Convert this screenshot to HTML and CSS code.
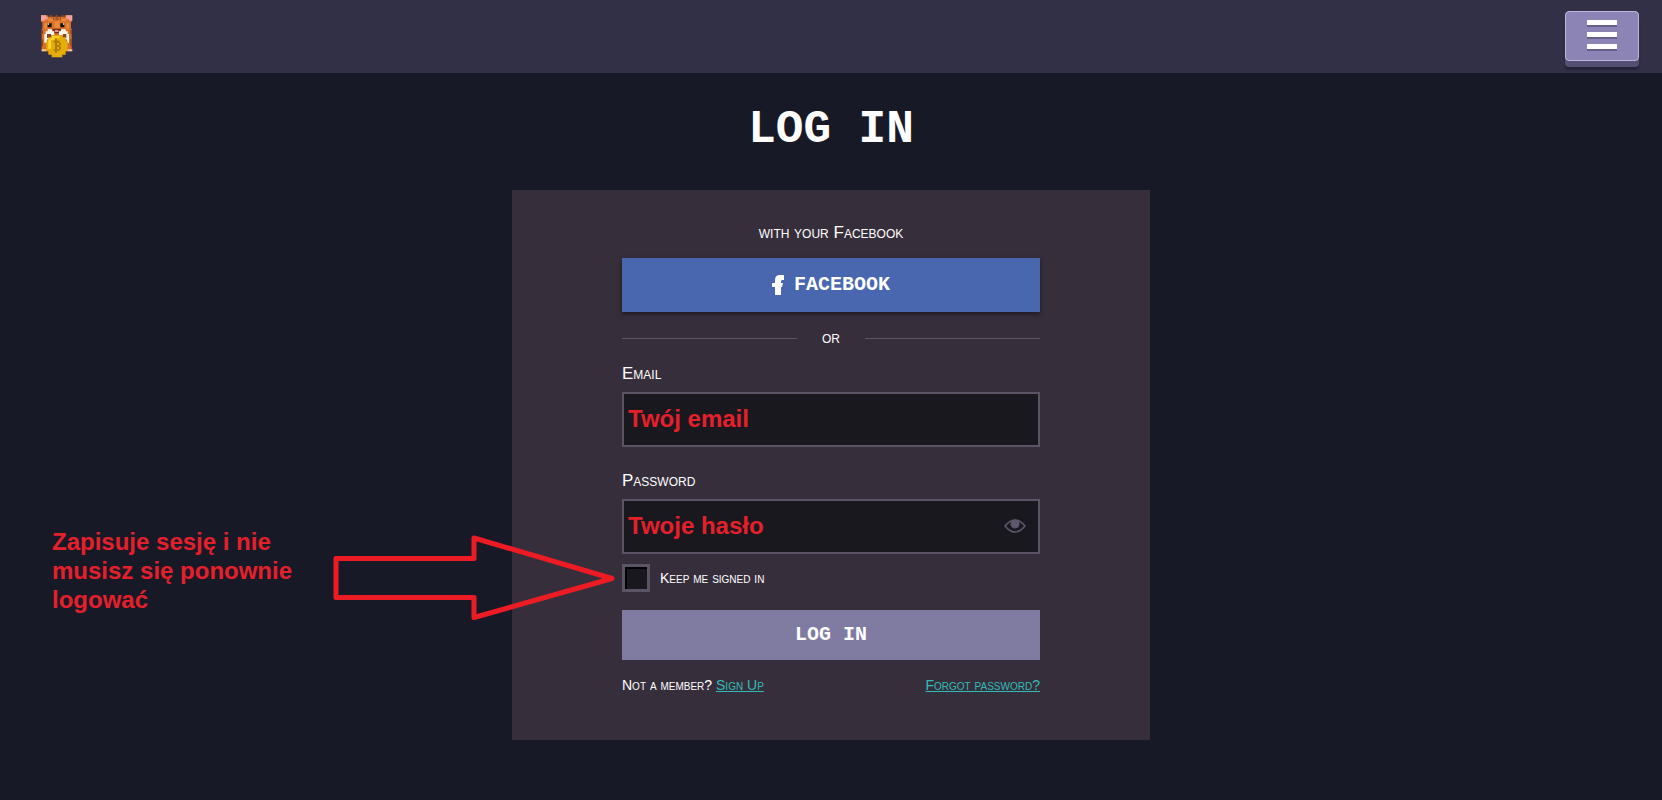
FILE: index.html
```html
<!DOCTYPE html>
<html lang="en">

<head>
    <meta charset="UTF-8">
    <meta name="viewport" content="width=device-width, initial-scale=1.0">
    <title>Log in</title>
    <link rel="stylesheet" href="styles.css">
</head>

<body>
    <header class="header">
        <a class="logo" href="#" aria-label="Home">
            <svg width="32" height="44" viewBox="0 0 96 132">
                <!-- ears and body -->
                <path fill="#d9702a" d="M0 4h20v4h52V4h20v20h-2v20h2v68H2V44h2V24H0z" />
                <path fill="#8d451d" d="M24 4h10v4H24zM44 2h6v8h-6zM60 4h10v4H60zM2 48h4v12H2zM88 48h4v12h-4zM2 76h4v20H2zM88 76h4v20h-4z" />
                <path fill="#f2a39b" d="M0 4h16v4h4v8h-8v4H0zM76 4h18v16H84v-4h-8z" />
                <path fill="#e9893b" d="M20 14h16v8H20zM60 14h16v8H60zM40 22h16v20H40zM10 28h8v16h-8zM76 28h8v16h-8z" />
                <path fill="#a65320" d="M36 10h4v8h-4zM44 10h8v8h-8zM56 10h4v8h-4z" />
                <!-- eyes -->
                <path fill="#14110f" d="M20 28h12v12H20zM58 28h12v12H58z" />
                <path fill="#f5e6d8" d="M20 28h4v4h-4zM66 28h4v4h-4z" />
                <!-- cheeks, mouth, paws -->
                <path fill="#fff7ee" d="M20 46h14v6h6v12H30v12H18v10H10V60h4v-8h6zM60 46h14v6h6v8h4v26h-6V76H66V64H54V52h6z" />
                <path fill="#6d3018" d="M34 44h26v6h-6v8H40v-8h-6z" />
                <path fill="#ef8f91" d="M42 48h10v6H42z" />
                <path fill="#8a4421" d="M18 60h12v12H18zM66 60h10v12H66z" />
                <path fill="#f2c4aa" d="M2 106h14v6H2zM80 106h14v6H80z" />
                <!-- coin -->
                <path fill="#e5ad08" d="M32 64h32v6h10v10h6v32h-6v10H64v8H32v-8H22v-10h-6V80h6V70h10z" />
                <path fill="#ffd42b" d="M32 66h24v5H32zM22 76h8v28h-8zM28 72h12v6H28z" />
                <path fill="#ad7a04" d="M42 74h6v6h8v6h4v8h-4v4h4v8h-4v4h-8v6h-6v-6h-4v-4h4V86h-4v-6h4zM48 86v8h6v-8zM48 99v7h6v-7z" />
            </svg>
        </a>
        <button class="menu" type="button" aria-label="Menu">
            <span></span>
            <span></span>
            <span></span>
        </button>
    </header>

    <main class="main">
        <h1 class="title">LOG IN</h1>
        <form class="card">
            <p class="hint">with your Facebook</p>
            <button class="btn facebook" type="button">
                <svg width="12" height="20" viewBox="0 0 12 20">
                    <path fill="#fff" d="M12 0v5H10Q9 5 9 7v1h2l-1 4H9v8H3v-8H0V8h3V5Q3 0 8 0z" />
                </svg>
                <span>FACEBOOK</span>
            </button>
            <div class="or">or</div>

            <label class="label" for="email">Email</label>
            <input class="input" id="email" type="text" value="Twój email">

            <label class="label" for="password">Password</label>
            <div class="password">
                <input class="input" id="password" type="text" value="Twoje hasło">
                <button class="eye" type="button" aria-label="Show password">
                    <svg width="22" height="14" viewBox="0 0 22 14">
                        <path fill="none" stroke="#5d586b" stroke-width="1.5" d="M1 7Q6 1 11 1T21 7Q16 13 11 13T1 7z" />
                        <circle cx="11" cy="5" r="4.5" fill="#5d586b" />
                    </svg>
                </button>
            </div>

            <div class="keep">
                <input class="check" id="keep" type="checkbox">
                <label for="keep">Keep me signed in</label>
                <div class="note">
                    <p>Zapisuje sesję i nie musisz się ponownie logować</p>
                    <svg width="282" height="86" viewBox="0 0 282 86">
                        <path fill="none" stroke="#ed1c24" stroke-width="5" stroke-linejoin="round" d="M3 23.500H141V3L279 43.500 141 82.500V62.500H3z" />
                    </svg>
                </div>
            </div>

            <button class="btn submit" type="submit">LOG IN</button>
            <div class="links">
                <span>Not a member? <a href="#">Sign Up</a></span>
                <a href="#">Forgot password?</a>
            </div>
        </form>
    </main>
</body>

</html>
```

FILE: styles.css
```css
* {
    box-sizing: border-box;
}

body,
h1,
p {
    margin: 0;
    padding: 0;
}

body {
    min-height: 100vh;
    background-color: #181927;
    color: #fff;
    font-family: "Liberation Sans", Arial, sans-serif;
}

button {
    padding: 0;
    border: 0;
    color: #fff;
    cursor: pointer;
}

/* header */
.header {
    display: flex;
    justify-content: space-between;
    align-items: flex-start;
    height: 73px;
    padding: 11px 23px 0 41px;
    background-color: #313046;
}
.logo {
    padding-top: 3px;
}
.logo svg {
    display: block;
}
.menu {
    display: flex;
    flex-direction: column;
    align-items: center;
    justify-content: center;
    gap: 7px;
    width: 74px;
    height: 50px;
    padding-bottom: 4px;
    border: 1px solid #c0b5dc;
    border-radius: 4px;
    background-color: #8c84b4;
    box-shadow: 0 6px 0 #544e72, 0 9px 2px #242338;
}
.menu span {
    width: 30px;
    height: 5px;
    background-color: #fff;
    box-shadow: 0 2px 0 #66608a;
}

/* log in form */
.main {
    padding: 27px 0 60px;
}
.title {
    margin-bottom: 30px;
    font: bold 46px/60px "Liberation Mono", monospace;
    text-align: center;
}
.card {
    max-width: 638px;
    margin: 0 auto;
    padding: 33px 110px 45px;
    background-color: #372e3c;
    font-variant: small-caps;
}
.hint {
    margin-bottom: 15px;
    font-size: 17px;
    line-height: 20px;
    text-align: center;
}
.btn {
    display: flex;
    align-items: center;
    justify-content: center;
    gap: 10px;
    width: 100%;
    font: bold 20px/24px "Liberation Mono", monospace;
}
.facebook {
    height: 54px;
    background-color: #4867ae;
    box-shadow: 0 2px 5px rgba(0, 0, 0, .5);
}
.or {
    display: flex;
    align-items: center;
    gap: 25px;
    margin: 16px 0;
    font-size: 17px;
    line-height: 20px;
}
.or::before,
.or::after {
    content: "";
    flex: 1;
    height: 1px;
    background-color: #5d5666;
}
.label {
    display: block;
    margin-bottom: 8px;
    font-size: 17px;
    line-height: 20px;
}
.input {
    display: block;
    width: 100%;
    height: 55px;
    padding: 0 4px 2px;
    border: 2px solid #5a5464;
    outline: none;
    background-color: #1a181f;
    color: #e5202b;
    font: bold 24px "Liberation Sans", Arial, sans-serif;
}
#email {
    margin-bottom: 24px;
}
.password {
    position: relative;
}
.eye {
    position: absolute;
    top: 20px;
    right: 14px;
    background: none;
}
.eye svg {
    display: block;
}
.keep {
    position: relative;
    display: flex;
    align-items: center;
    gap: 10px;
    margin: 10px 0 18px;
    font-size: 14px;
}
.check {
    appearance: none;
    width: 28px;
    height: 28px;
    margin: 0;
    border: 3px solid #5a5464;
    background-color: #1a181f;
    box-shadow: inset 2px 2px 0 #000;
}
.submit {
    height: 50px;
    background-color: #807ba1;
}
.links {
    display: flex;
    justify-content: space-between;
    margin-top: 15px;
    font-size: 14px;
    line-height: 20px;
}
.links a {
    color: #30bdb9;
}

/* red note with an arrow to the tick box */
.note {
    position: absolute;
    top: -37px;
    right: calc(100% + 7px);
    display: flex;
    align-items: flex-start;
    gap: 31px;
    color: #e5202b;
    font: bold 24px/29px "Liberation Sans", Arial, sans-serif;
    font-variant: normal;
}
.note p {
    width: 250px;
}
.note svg {
    margin-top: 8px;
}
```
